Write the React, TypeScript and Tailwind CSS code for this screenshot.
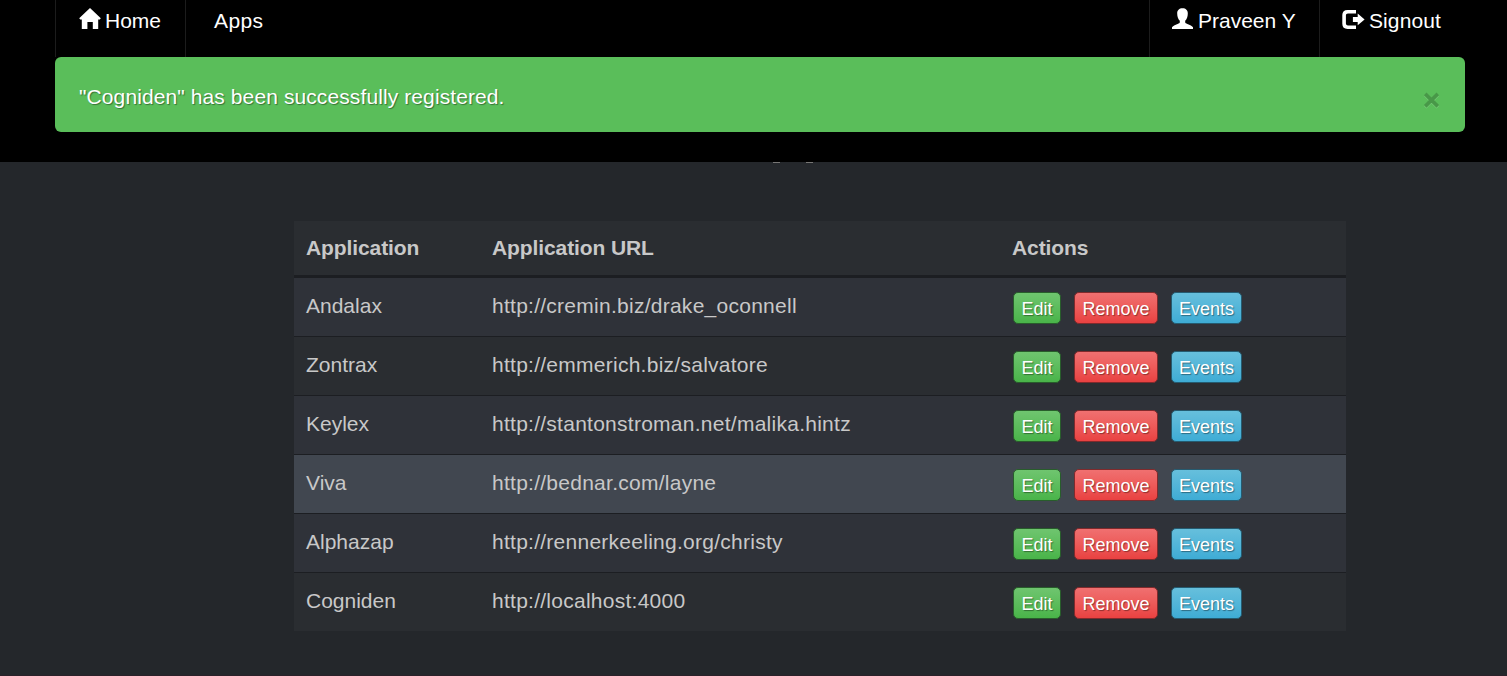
const rows = [
  { name: 'Andalax', url: 'http://cremin.biz/drake_oconnell', bg: 'bg-[#2f3239]' },
  { name: 'Zontrax', url: 'http://emmerich.biz/salvatore', bg: 'bg-[#2a2d31]' },
  { name: 'Keylex', url: 'http://stantonstroman.net/malika.hintz', bg: 'bg-[#2f3239]' },
  { name: 'Viva', url: 'http://bednar.com/layne', bg: 'bg-[#414750]' },
  { name: 'Alphazap', url: 'http://rennerkeeling.org/christy', bg: 'bg-[#2f3239]' },
  { name: 'Cogniden', url: 'http://localhost:4000', bg: 'bg-[#2a2d31]' },
];

const buttonBase =
  'h-8 shrink-0 rounded-[5px] border text-center text-[18px] leading-[33px] text-white [text-shadow:1px_1px_1px_rgba(0,0,0,0.4)]';

function HomeIcon() {
  return (
    <svg className="h-[22px] w-[22px]" viewBox="0 0 22 22" fill="#fff">
      <path d="M11 0 L21.8 10.3 L20.8 11.6 H19.2 V21 H13.8 V14 H8.4 V21 H2.8 V11.6 H1.3 L0.2 10.3 Z" />
    </svg>
  );
}

function UserIcon() {
  return (
    <svg className="h-[22px] w-[22px]" viewBox="0 0 22 22" fill="#fff">
      <path d="M10.5 0.2C7.2 0.2 5.1 2.2 5.2 5.4C5.2 8.6 6.2 11.2 7.8 12.8V14.2C7.8 15 7 15.4 5.6 15.9C3.2 16.8 0.6 18 0 19.2V21H21V19.2C20.4 18 17.8 16.8 15.4 15.9C14 15.4 13.2 15 13.2 14.2V12.8C14.8 11.2 15.8 8.6 15.8 5.4C15.9 2.2 13.8 0.2 10.5 0.2Z" />
    </svg>
  );
}

function SignoutIcon() {
  return (
    <svg className="h-[22px] w-[23px]" viewBox="0 0 23 22" fill="#fff">
      <path d="M14 1.9H5.6C2.2 1.9 0.3 3.7 0.3 7.1V15.8C0.3 19.2 2.2 21 5.6 21H14V17.4H6C4.6 17.4 3.9 16.7 3.9 15.3V7.6C3.9 6.2 4.6 5.5 6 5.5H14Z" />
      <path d="M15.7 5.6L22.6 11.4L15.7 17.2V13.9H10.9V9H15.7Z" />
    </svg>
  );
}

export default function App() {
  return (
    <div className="flex h-[676px] w-[1507px] flex-col overflow-hidden border-b border-[#2b2129] bg-[#24272b] font-['Liberation_Sans',Arial,sans-serif] text-[21px] text-[#c8c8c8]">
      <header className="h-[162px] shrink-0 bg-black px-[55px] text-white">
        <nav className="flex h-[57px] w-[1410px] leading-[42px]">
          <a className="flex w-[130px] border-l border-[#1c1c1c] pl-[23px]">
            <span className="mt-[8px] mr-[4px]"><HomeIcon /></span>
            <span>Home</span>
          </a>
          <a className="flex-1 border-l border-[#1c1c1c] pl-[28px] tracking-[0.4px]">Apps</a>
          <a className="flex w-[170px] border-l border-[#1c1c1c] pl-[22px]">
            <span className="mt-[8px] mr-[4px]"><UserIcon /></span>
            <span className="whitespace-nowrap">Praveen Y</span>
          </a>
          <a className="flex w-[146px] border-l border-[#1c1c1c] pl-[22px]">
            <span className="mt-[8px] mr-[4px]"><SignoutIcon /></span>
            <span className="tracking-[0.1px]">Signout</span>
          </a>
        </nav>
        <div className="flex h-[75px] w-[1410px] items-start justify-between rounded-md bg-[#5abe5a] pr-[25px] pl-[24px]">
          <p className="leading-[79px] tracking-[0.1px] [text-shadow:1px_1px_1px_rgba(0,0,0,0.4)]">
            "Cogniden" has been successfully registered.
          </p>
          <svg className="mt-[35px] h-[17px] w-[17px]" viewBox="0 0 17 17" fill="none">
            <path d="M2.2 2.7L14.8 15.2M14.8 2.7L2.2 15.2" stroke="#7bcb7b" strokeWidth="3.6" />
            <path d="M2.2 1.9L14.8 14.4M14.8 1.9L2.2 14.4" stroke="#489848" strokeWidth="3.6" />
          </svg>
        </div>
      </header>
      <div className="flex h-[59px] shrink-0 gap-[26px] pl-[773px]">
        <span className="h-px w-[7px] bg-[#777675]" />
        <span className="h-px w-[7px] bg-[#777675]" />
      </div>
      <table className="ml-[294px] w-[1052px] table-fixed border-collapse text-left">
        <colgroup>
          <col className="w-[186px]" />
          <col className="w-[520px]" />
          <col className="w-[346px]" />
        </colgroup>
        <thead>
          <tr className="h-[57px] bg-[#2a2d31] leading-[54px] tracking-[-0.1px] shadow-[inset_0_-3px_0_#1c1e22]">
            <th className="p-0 pb-[3px] pl-3">Application</th>
            <th className="p-0 pb-[3px] pl-3">Application URL</th>
            <th className="p-0 pb-[3px] pl-3">Actions</th>
          </tr>
        </thead>
        <tbody>
          {rows.map((row, i) => (
            <tr
              key={row.name}
              className={`${row.bg} ${i === 0 ? 'h-[58px]' : 'h-[59px] shadow-[inset_0_1px_0_#1c1e22]'}`}
            >
              <td className="p-0 pb-[2px] pl-3 leading-[56px]">{row.name}</td>
              <td className="p-0 pb-[2px] pl-3 leading-[56px] tracking-[0.26px]">{row.url}</td>
              <td className="p-0 pl-[13px]">
                <div className={`flex gap-[13px] ${i === 0 ? 'pt-[2px]' : 'pt-[3px]'}`}>
                  <button className={`${buttonBase} w-12 border-[#285d2b] bg-linear-to-b from-[#6fc56f] to-[#49b449]`}>Edit</button>
                  <button className={`${buttonBase} w-[84px] border-[#802a2c] bg-linear-to-b from-[#f07070] to-[#e94141]`}>Remove</button>
                  <button className={`${buttonBase} w-[71px] border-[#255b70] bg-linear-to-b from-[#66bfdc] to-[#3eacd5]`}>Events</button>
                </div>
              </td>
            </tr>
          ))}
        </tbody>
      </table>
    </div>
  );
}
